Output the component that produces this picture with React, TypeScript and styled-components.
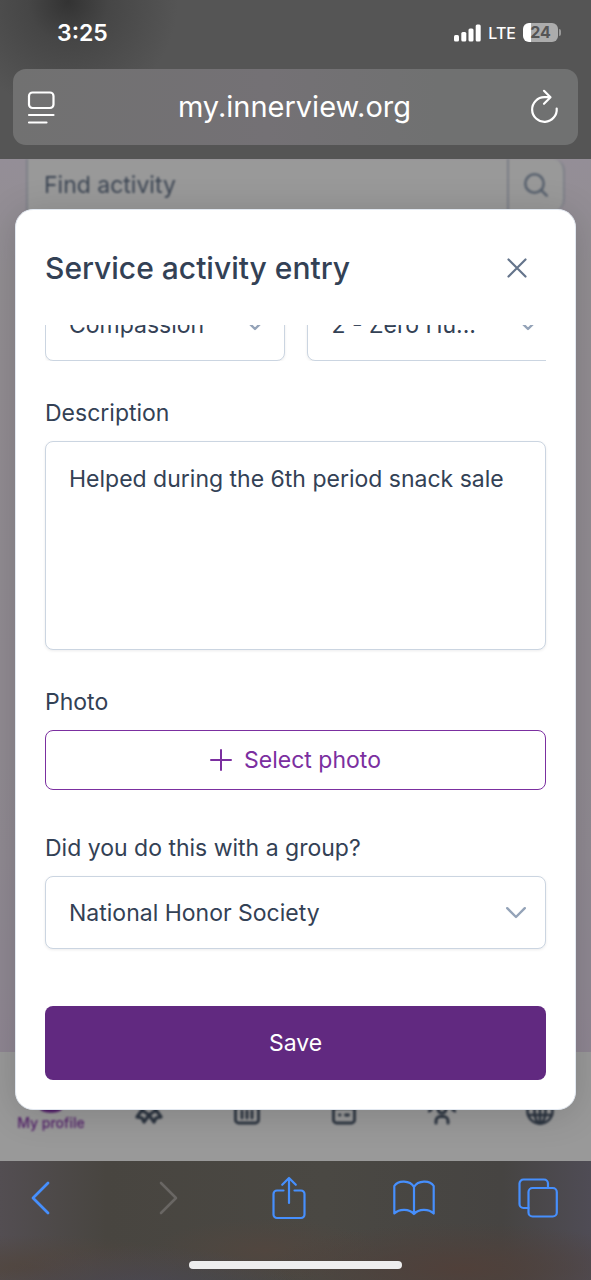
import React from "react";
import styled, { createGlobalStyle, css } from "styled-components";

const GlobalStyle = createGlobalStyle`
  *, *::before, *::after { box-sizing: border-box; }
  body { margin: 0; background: #555555; }
  body, button, input, select, textarea {
    font-family: Inter, "Liberation Sans", sans-serif;
  }
`;

const Screen = styled.div`
  display: flex;
  flex-direction: column;
  min-height: 100vh;
`;

/* Browser chrome, top */
const Chrome = styled.header`
  padding: 0 13px 14px;
  background:
    radial-gradient(circle at 68px 2px, #333333 0, rgba(60, 60, 60, 0.6) 40px, rgba(85, 85, 85, 0) 110px),
    #555555;
  color: #ffffff;
`;

const StatusBar = styled.div`
  display: flex;
  align-items: center;
  justify-content: space-between;
  height: 69px;
  padding: 0 17px 4px 44px;
`;

const Clock = styled.time`
  font-size: 23px;
  font-weight: 600;
  line-height: 28px;
`;

const StatusIcons = styled.div`
  display: flex;
  align-items: center;
  gap: 7px;
  font-size: 16px;
  font-weight: 500;
  line-height: 20px;
`;

const Battery = styled.span`
  display: flex;
  align-items: center;
`;

const BatteryBody = styled.span`
  width: 35px;
  height: 19px;
  border-radius: 6px;
  background: linear-gradient(90deg, #ffffff 8px, #acacac 8px);
  color: #555555;
  font-size: 16px;
  font-weight: 700;
  line-height: 19px;
  text-align: center;
`;

const BatteryCap = styled.span`
  width: 2px;
  height: 7px;
  margin-left: 1px;
  border-radius: 0 2px 2px 0;
  background: #9a9a9a;
`;

const AddressBar = styled.div`
  display: flex;
  align-items: center;
  justify-content: space-between;
  height: 76px;
  padding: 0 19px 0 14px;
  border-radius: 13px;
  background: linear-gradient(90deg, #717171 0%, #747175 45%, #707171 75%);
`;

const Address = styled.span`
  flex: 1;
  padding-left: 4px;
  font-size: 29px;
  line-height: 36px;
  text-align: center;
`;

const IconButton = styled.button`
  display: flex;
  align-items: center;
  justify-content: center;
  padding: 0;
  border: 0;
  background: none;
  color: inherit;
`;

/* Web page */
const Stage = styled.main`
  display: grid;
  flex: 1;
  overflow: hidden;
`;

const Page = styled.div`
  display: flex;
  flex-direction: column;
  grid-area: 1 / 1;
  justify-content: space-between;
  background: linear-gradient(180deg, #f6edfb 0%, #f4ecf4 12%, #f0e6f4 70%, #ecdcf4 100%);
  filter: brightness(0.6);
`;

const SearchBox = styled.div`
  display: flex;
  height: 52px;
  margin: 0 26px;
  border: solid #d3d6e4;
  border-width: 0 2px;
  border-radius: 0 12px 12px 0;
  background: #ffffff;
  filter: blur(1px);
`;

const SearchInput = styled.input`
  flex: 1;
  min-width: 0;
  padding: 0 16px;
  border: 0;
  background: none;
  font-size: 23px;
  &::placeholder { color: #64748b; opacity: 1; }
`;

const SearchButton = styled(IconButton)`
  width: 56px;
  border-left: 2px solid #cbd0de;
  color: #94a3b8;
`;

const TabBar = styled.nav`
  display: grid;
  grid-template-columns: repeat(6, 1fr);
  height: 109px;
  padding: 0 2px;
  background: #ffffff;
`;

const Tab = styled.a<{ $active?: boolean }>`
  display: flex;
  flex-direction: column;
  align-items: center;
  padding-top: ${(p) => (p.$active ? 33 : 46)}px;
  color: ${(p) => (p.$active ? "#8a35b0" : "#475569")};
  filter: blur(1px);
  font-size: 14px;
  font-weight: 500;
  line-height: 20px;
  text-decoration: none;
  white-space: nowrap;
`;

/* Dialog */
const DialogLayer = styled.div`
  display: flex;
  flex-direction: column;
  grid-area: 1 / 1;
  z-index: 1;
  padding: 50px 15px 51px;
`;

const Dialog = styled.section`
  display: flex;
  flex-direction: column;
  border: 1px solid #e2e8f0;
  border-radius: 18px;
  background: #ffffff;
  box-shadow: 0 4px 36px rgba(0, 0, 0, 0.16);
  color: #334155;
`;

const DialogHeader = styled.div`
  display: flex;
  align-items: center;
  justify-content: space-between;
  height: 115px;
  padding: 0 44px 0 29px;
`;

const DialogTitle = styled.h2`
  margin: 0;
  font-size: 30px;
  font-weight: 500;
  line-height: 36px;
`;

const CloseButton = styled(IconButton)`
  width: 28px;
  height: 28px;
  color: #64748b;
`;

const Form = styled.form`
  display: flex;
  flex-direction: column;
  padding: 0 29px 29px;
`;

/* Bottom strip of the row that has been scrolled under the header */
const ScrolledRow = styled.div`
  display: grid;
  grid-template-columns: 48% 50%;
  column-gap: 22px;
  align-content: end;
  height: 36px;
  overflow: hidden;
`;

const Field = styled.div<{ $spaced?: boolean }>`
  display: flex;
  flex-direction: column;
  gap: 12px;
  margin-top: ${(p) => (p.$spaced ? 42 : 36)}px;
`;

const Label = styled.label`
  font-size: 23px;
  line-height: 32px;
`;

const control = css`
  width: 100%;
  border: 1px solid #cbd5e1;
  border-radius: 8px;
  background: #ffffff;
  box-shadow: 0 1px 3px rgba(18, 18, 23, 0.08);
  color: #334155;
  font-size: 23px;
`;

const TextArea = styled.textarea`
  ${control}
  display: block;
  height: 209px;
  padding: 20px 23px;
  line-height: 34px;
  resize: none;
`;

const SelectWrap = styled.div`
  display: grid;
  align-items: center;
  > * { grid-area: 1 / 1; }
  > svg { justify-self: end; margin-right: 20px; pointer-events: none; }
`;

const Select = styled.select`
  ${control}
  height: 73px;
  padding: 0 48px 0 23px;
  appearance: none;
`;

const PhotoButton = styled.button`
  display: flex;
  align-items: center;
  justify-content: center;
  gap: 12px;
  height: 60px;
  border: 1px solid #7b2fa0;
  border-radius: 8px;
  background: #ffffff;
  color: #7b2fa0;
  font-size: 23px;
`;

const SaveButton = styled.button`
  height: 74px;
  margin-top: 57px;
  border: 0;
  border-radius: 8px;
  background: #612980;
  color: #ffffff;
  font-size: 23px;
`;

/* Browser chrome, bottom */
const BottomChrome = styled.footer`
  display: flex;
  flex-direction: column;
  align-items: center;
  justify-content: space-between;
  height: 119px;
  padding-bottom: 11px;
  background:
    radial-gradient(ellipse at 24% 110%, rgba(74, 72, 84, 0.9), rgba(74, 72, 84, 0) 25%),
    radial-gradient(ellipse at 6% 90%, #51463f, rgba(81, 70, 63, 0) 22%),
    radial-gradient(ellipse at 78% 90%, #50403a, rgba(80, 64, 58, 0) 30%),
    radial-gradient(ellipse at 45% 75%, #51463f, rgba(81, 70, 63, 0) 25%),
    linear-gradient(90deg, #534e52 0%, #484540 18%, #4a4843 55%, #464442 85%, #4f4c55 100%);
`;

const Tools = styled.div`
  display: flex;
  align-items: center;
  justify-content: space-between;
  width: 100%;
  height: 73px;
  padding: 0 32px 0 19px;
  color: #468ffd;
`;

const ToolButton = styled(IconButton)`
  width: 42px;
`;

const HomeIndicator = styled.div`
  width: 36%;
  height: 8px;
  border-radius: 4px;
  background: #eeeeee;
`;

const line = {
  fill: "none",
  stroke: "currentColor",
  strokeLinecap: "round" as const,
  strokeLinejoin: "round" as const,
  "aria-hidden": true,
};

const Chevron = () => (
  <svg width="20" height="12" viewBox="0 0 20 12" {...line} stroke="#94a3b8" strokeWidth="2.4">
    <path d="M1.2 1.2 10 10l8.800-8.800" />
  </svg>
);

export default function App() {
  return (
    <Screen>
      <GlobalStyle />
      <Chrome>
        <StatusBar>
          <Clock>3:25</Clock>
          <StatusIcons>
            <svg width="27" height="18" viewBox="0 0 27 18" fill="#fff" aria-hidden="true">
              <rect x="0" y="11" width="5" height="6.500" rx="1.500" />
              <rect x="7.300" y="8" width="5" height="9.500" rx="1.500" />
              <rect x="14.500" y="4.500" width="5" height="13" rx="1.500" />
              <rect x="21.700" y="0.500" width="5" height="17" rx="1.500" />
            </svg>
            <span>LTE</span>
            <Battery>
              <BatteryBody>24</BatteryBody>
              <BatteryCap />
            </Battery>
          </StatusIcons>
        </StatusBar>
        <AddressBar>
          <IconButton aria-label="Page menu">
            <svg width="28" height="33" viewBox="0 0 28 33" {...line} strokeWidth="2.2">
              <rect x="2" y="1.500" width="24.500" height="15.500" rx="3.500" />
              <path d="M2 24h24.500M2 31.500h17.500" />
            </svg>
          </IconButton>
          <Address>my.innerview.org</Address>
          <IconButton aria-label="Reload">
            <svg width="29" height="36" viewBox="0 0 29 36" {...line} strokeWidth="2.2">
              <path d="M26.700 19.500A12.300 12.300 0 1 1 14.400 8.200H20M14 1.800l6.500 6.500-6.500 6.500" />
            </svg>
          </IconButton>
        </AddressBar>
      </Chrome>

      <Stage>
        <Page>
          <SearchBox>
            <SearchInput aria-label="Find activity" placeholder="Find activity" />
            <SearchButton aria-label="Search">
              <svg width="26" height="26" viewBox="0 0 26 26" {...line} strokeWidth="2.600">
                <circle cx="11.500" cy="11.500" r="9.200" />
                <path d="m18.200 18.200 5.500 5.500" />
              </svg>
            </SearchButton>
          </SearchBox>
          <TabBar>
            <Tab href="#profile" $active>
              <svg width="28" height="28" viewBox="0 0 28 28" fill="currentColor" aria-hidden="true">
                <circle cx="14" cy="8" r="6" />
                <path d="M3 24c0-5 5-8 11-8s11 3 11 8c-2 5-20 5-22 0Z" />
              </svg>
              My profile
            </Tab>
            <Tab href="#community" aria-label="Community">
              <svg width="28" height="28" viewBox="0 0 28 28" {...line} strokeWidth="3.200">
                <path d="m2 19 5-7 7 5 7-5 5 7-5 1-2 4-5-7-5 7-2-4ZM7 12l3-5h8l3 5" />
              </svg>
            </Tab>
            <Tab href="#service" aria-label="Service">
              <svg width="28" height="28" viewBox="0 0 28 28" {...line} strokeWidth="2.800">
                <path d="M2 9h24M2.500 9v13a3 3 0 0 0 3 3h17a3 3 0 0 0 3-3V9M9 13v7M14 13v7M19 13v7" />
              </svg>
            </Tab>
            <Tab href="#calendar" aria-label="Calendar">
              <svg width="28" height="28" viewBox="0 0 28 28" {...line} strokeWidth="2.800">
                <rect x="3.500" y="4" width="21" height="21" rx="3" />
                <path d="M4 10h20M9.500 17h.5M15.500 17h3" />
              </svg>
            </Tab>
            <Tab href="#groups" aria-label="Groups">
              <svg width="28" height="28" viewBox="0 0 28 28" {...line} strokeWidth="3">
                <circle cx="14" cy="11" r="4" />
                <path d="M8 25v-2a4.500 4.500 0 0 1 4.500-4.500h3A4.500 4.500 0 0 1 20 23v2M1 13l2-1M27 13l-2-1" />
              </svg>
            </Tab>
            <Tab href="#world" aria-label="World">
              <svg width="28" height="28" viewBox="0 0 28 28" {...line} strokeWidth="2.600">
                <circle cx="14" cy="13" r="12.500" />
                <ellipse cx="14" cy="13" rx="5.500" ry="12.500" />
                <path d="M2 9h24M2 17h24M14 1v24" />
              </svg>
            </Tab>
          </TabBar>
        </Page>

        <DialogLayer>
          <Dialog role="dialog" aria-labelledby="entry-title">
            <DialogHeader>
              <DialogTitle id="entry-title">Service activity entry</DialogTitle>
              <CloseButton aria-label="Close">
                <svg width="20" height="20" viewBox="0 0 20 20" {...line} strokeWidth="2.2">
                  <path d="m1.500 1.500 17 17M18.500 1.500l-17 17" />
                </svg>
              </CloseButton>
            </DialogHeader>
            <Form onSubmit={(e) => e.preventDefault()}>
              <ScrolledRow>
                <SelectWrap>
                  <Select aria-label="Value">
                    <option>Compassion</option>
                  </Select>
                  <Chevron />
                </SelectWrap>
                <SelectWrap>
                  <Select aria-label="Goal">
                    <option>2 - Zero Hu...</option>
                  </Select>
                  <Chevron />
                </SelectWrap>
              </ScrolledRow>
              <Field>
                <Label htmlFor="description">Description</Label>
                <TextArea id="description" defaultValue="Helped during the 6th period snack sale" />
              </Field>
              <Field>
                <Label htmlFor="photo">Photo</Label>
                <PhotoButton id="photo" type="button">
                  <svg width="22" height="22" viewBox="0 0 22 22" {...line} strokeWidth="2">
                    <path d="M11 1v20M1 11h20" />
                  </svg>
                  Select photo
                </PhotoButton>
              </Field>
              <Field $spaced>
                <Label htmlFor="group">Did you do this with a group?</Label>
                <SelectWrap>
                  <Select id="group">
                    <option>National Honor Society</option>
                  </Select>
                  <Chevron />
                </SelectWrap>
              </Field>
              <SaveButton type="submit">Save</SaveButton>
            </Form>
          </Dialog>
        </DialogLayer>
      </Stage>

      <BottomChrome>
        <Tools>
          <ToolButton aria-label="Back">
            <svg width="20" height="34" viewBox="0 0 20 34" {...line} strokeWidth="2.800">
              <path d="M18 2 3 17l15 15" />
            </svg>
          </ToolButton>
          <ToolButton aria-label="Forward" disabled>
            <svg width="28" height="34" viewBox="0 0 28 34" {...line} stroke="#696663" strokeWidth="2.600">
              <path d="m10 2 15 15-15 15" />
            </svg>
          </ToolButton>
          <ToolButton aria-label="Share">
            <svg width="34" height="44" viewBox="0 0 34 44" {...line} strokeWidth="2.200">
              <path d="M11.500 14.500H5a3.500 3.500 0 0 0-3.500 3.500v20.500A3.500 3.500 0 0 0 5 42h24a3.500 3.500 0 0 0 3.500-3.500V18a3.500 3.500 0 0 0-3.500-3.500h-6.500M17 27V2M10.200 8.800 17 2l6.800 6.800" />
            </svg>
          </ToolButton>
          <ToolButton aria-label="Bookmarks">
            <svg width="42" height="36" viewBox="0 0 42 36" {...line} strokeWidth="2.200">
              <path d="M21 7C17 0 5 0 1.300 6v27.500c5-5 15-5 19.700.500 4.700-5.500 14.700-5.500 19.700-.500V6C37 0 25 0 21 7v27" />
            </svg>
          </ToolButton>
          <ToolButton aria-label="Tabs">
            <svg width="40" height="40" viewBox="0 0 40 40" {...line} strokeWidth="2.200">
              <rect x="10.500" y="10" width="28.300" height="28.500" rx="4" />
              <path d="M10.500 30H5.500a4 4 0 0 1-4-4V5.500a4 4 0 0 1 4-4H26a4 4 0 0 1 4 4V10" />
            </svg>
          </ToolButton>
        </Tools>
        <HomeIndicator />
      </BottomChrome>
    </Screen>
  );
}
